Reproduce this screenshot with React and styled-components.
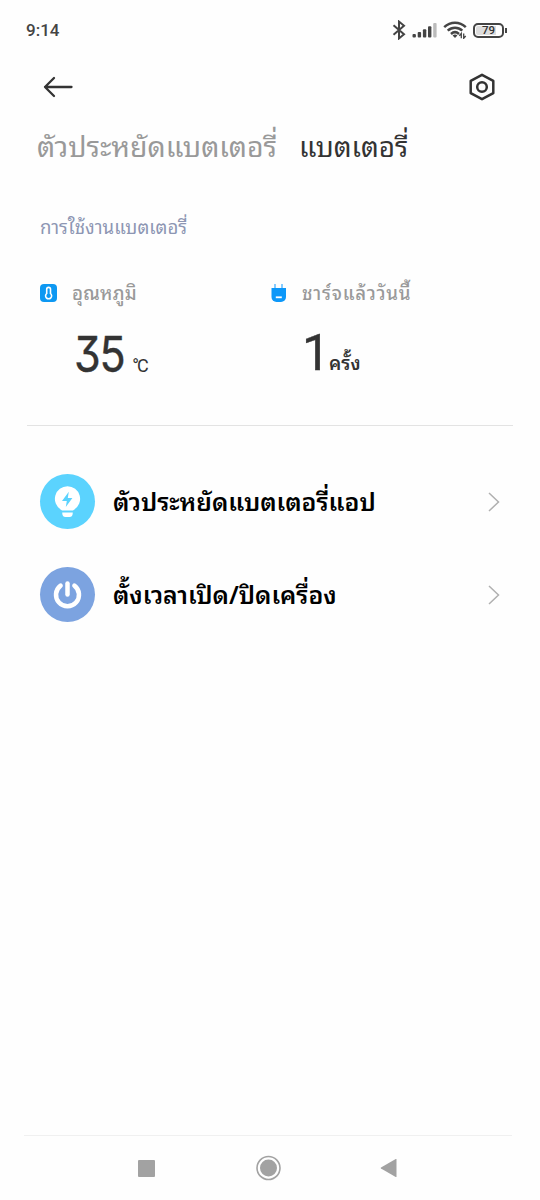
import styled, { createGlobalStyle } from 'styled-components';

export default function App() {
  return (
    <>
      <GlobalStyle />
      <Screen>
        <StatusBar>
          <Clock>9:14</Clock>
          <StatusIcons>
            <BluetoothIcon />
            <SignalIcon />
            <WifiIcon />
            <Battery>
              <BatteryBody>79</BatteryBody>
              <BatteryTip />
            </Battery>
          </StatusIcons>
        </StatusBar>
        <Toolbar>
          <BackIcon />
          <SettingsIcon />
        </Toolbar>
        <Tabs>
          <Tab>ตัวประหยัดแบตเตอรี่</Tab>
          <Tab $active>แบตเตอรี่</Tab>
        </Tabs>
        <SectionTitle>การใช้งานแบตเตอรี่</SectionTitle>
        <Stats>
          <Stat>
            <StatLabel>
              <ThermometerIcon />
              <LabelText>อุณหภูมิ</LabelText>
            </StatLabel>
            <StatValue>
              <Digits>35</Digits>
              <Degree>°C</Degree>
            </StatValue>
          </Stat>
          <Stat>
            <StatLabel>
              <PlugIcon />
              <LabelText $wide>ชาร์จแล้ววันนี้</LabelText>
            </StatLabel>
            <StatValue $raised>
              <Count>1</Count>
              <Times>ครั้ง</Times>
            </StatValue>
          </Stat>
        </Stats>
        <Divider />
        <Menu>
          <MenuItem>
            <Round $color="#5bd3fe">
              <BulbIcon />
            </Round>
            <MenuText>ตัวประหยัดแบตเตอรี่แอป</MenuText>
            <ChevronIcon />
          </MenuItem>
          <MenuItem>
            <Round $color="#7ca3e0">
              <PowerIcon />
            </Round>
            <MenuText>ตั้งเวลาเปิด/ปิดเครื่อง</MenuText>
            <ChevronIcon />
          </MenuItem>
        </Menu>
        <NavBar>
          <SquareIcon />
          <HomeIcon />
          <TriangleIcon />
        </NavBar>
      </Screen>
    </>
  );
}

const BluetoothIcon = () => (
  <svg width="14" height="20" viewBox="0 0 14 20" fill="none" stroke="#444" strokeWidth="2">
    <path d="M1.5 5.3 12 14.3 7 18.4V1.6l5 4.1L1.5 14.7" />
  </svg>
);

const SignalIcon = () => (
  <svg width="25" height="16" viewBox="0 0 25 16" fill="#444">
    <rect x="0.5" y="12" width="3.4" height="3.5" rx="1" />
    <rect x="5.7" y="10" width="3.4" height="5.5" rx="1" />
    <rect x="10.9" y="7.3" width="3.4" height="8.2" rx="1" />
    <rect x="16" y="4.2" width="3.4" height="11.3" rx="1" />
    <rect x="21.2" y="1" width="3.4" height="14.5" rx="1" fill="#bbb" />
  </svg>
);

const WifiIcon = () => (
  <svg width="24" height="18" viewBox="0 0 24 18" fill="none" stroke="#444" strokeWidth="2.5">
    <path d="M1.2 6.2C7.5 .3 16.5 .3 22.8 6.2" />
    <path d="M4.7 9.7C9 5.7 15 5.7 19.3 9.7" />
    <path d="M8 13C10.5 10.7 13.5 10.7 16 13" />
    <path d="M9.6 14.4C11 13.3 13 13.3 14.4 14.4L12 17Z" fill="#444" stroke="none" />
    <path d="M18.3 17.3V12.5l-2 2.3M20.7 12.5v4.8l2-2.3" strokeWidth="1.3" />
  </svg>
);

const BackIcon = () => (
  <svg width="30" height="22" viewBox="0 0 30 22" fill="none" stroke="#333" strokeWidth="2.3" strokeLinecap="round" strokeLinejoin="round">
    <path d="M28.5 11H2M11 2 2 11l9 9" />
  </svg>
);

const SettingsIcon = () => (
  <svg width="28" height="28" viewBox="0 0 28 28" fill="none" stroke="#333" strokeWidth="2.5" strokeLinejoin="round">
    <path d="M14 1.8 25.3 7.9v12.2L14 26.2 2.7 20.1V7.9Z" />
    <circle cx="14" cy="14" r="4.8" />
  </svg>
);

const ThermometerIcon = () => (
  <svg width="17" height="18" viewBox="0 0 17 18">
    <rect width="17" height="18" rx="4" fill="#0d98f2" />
    <path d="M6.7 5.3a1.9 1.9 0 0 1 3.8 0v4.2a3 3 0 1 1-3.8 0Z" fill="none" stroke="#fff" strokeWidth="1.6" />
  </svg>
);

const PlugIcon = () => (
  <svg width="17" height="18" viewBox="0 0 17 18">
    <path d="M4 0h2v4H4zM11 0h2v4h-2z" fill="#85cbff" />
    <path d="M1.500 4h14.500v9a5 5 0 0 1-5 5H6.500a5 5 0 0 1-5-5Z" fill="#0d98f9" />
    <path d="M5.8 13.300h6" stroke="#fff" strokeWidth="1.8" />
  </svg>
);

const BulbIcon = () => (
  <svg width="55" height="55" viewBox="0 0 55 55">
    <path d="M27.5 12.3a12.6 12.6 0 0 1 6.5 23.4q-1 .9-2 .9h-9q-1 0-2-.9a12.6 12.6 0 0 1 6.5-23.4Z" fill="#fff" />
    <path d="M28.8 17.8 22 27h4.8l-1 6 6.6-9h-4.6Z" fill="#5bd3fe" />
    <path d="M22.2 38.5h10.6q0 4.5-3.3 4.5h-4q-3.3 0-3.3-4.5Z" fill="#fff" />
  </svg>
);

const PowerIcon = () => (
  <svg width="55" height="55" viewBox="0 0 55 55" fill="none" stroke="#fff" strokeWidth="4.5" strokeLinecap="round">
    <path d="M27.5 16.5v11" />
    <path d="M20.6 18.6a11.5 11.5 0 1 0 13.8 0" />
  </svg>
);

const ChevronIcon = () => (
  <svg width="12" height="20" viewBox="0 0 12 20" fill="none" stroke="#b0b0b0" strokeWidth="1.5">
    <path d="M1 1l9.5 9L1 19" />
  </svg>
);

const SquareIcon = () => (
  <svg width="17" height="17" viewBox="0 0 17 17" fill="#a2a2a2">
    <rect width="17" height="17" rx="1" />
  </svg>
);

const HomeIcon = () => (
  <svg width="26" height="26" viewBox="0 0 26 26" fill="#a2a2a2">
    <circle cx="13.5" cy="13" r="11.5" fill="none" stroke="#a2a2a2" strokeWidth="1.6" />
    <circle cx="13.5" cy="13" r="8.5" />
  </svg>
);

const TriangleIcon = () => (
  <svg width="17" height="20" viewBox="0 0 17 20" fill="#a2a2a2">
    <path d="M16.5 1.5v17q0 .8-.8.4L1 10.6q-.8-.6 0-1.2L15.7 1.1q.8-.4.8.4Z" />
  </svg>
);

const GlobalStyle = createGlobalStyle`
  body {
    margin: 0;
    background: #fefefe;
    font-family: 'Noto Sans Thai Looped', 'Noto Looped Thai', 'Droid Sans Thai', Loma, Waree, Garuda, 'Noto Sans', sans-serif;
  }

  svg {
    display: block;
    flex-shrink: 0;
  }
`;

const Screen = styled.div`
  display: flex;
  flex-direction: column;
  width: 540px;
  height: 1200px;
  overflow: hidden;
  white-space: nowrap;
`;

const StatusBar = styled.div`
  display: flex;
  justify-content: space-between;
  align-items: center;
  height: 60px;
  padding: 0 33px 0 26px;
`;

const Clock = styled.span`
  font: 500 17px Roboto, sans-serif;
  color: #444;
`;

const StatusIcons = styled.div`
  display: flex;
  align-items: center;
  gap: 6px;
`;

const Battery = styled.div`
  display: flex;
  align-items: center;
  gap: 1px;
`;

const BatteryBody = styled.div`
  display: flex;
  align-items: center;
  justify-content: center;
  box-sizing: border-box;
  width: 31px;
  height: 15px;
  border: 2px solid #444;
  border-radius: 5px;
  box-shadow: inset 0 0 0 1px #fff;
  background: linear-gradient(to right, #ddd 79%, #fff 79%);
  font: 500 11.5px Roboto, sans-serif;
  color: #333;
`;

const BatteryTip = styled.div`
  width: 2px;
  height: 5px;
  background: #444;
`;

const Toolbar = styled.div`
  display: flex;
  justify-content: space-between;
  align-items: center;
  height: 53px;
  padding: 0 44px 0 43px;
`;

const Tabs = styled.div`
  display: flex;
  gap: 22px;
  height: 70px;
  padding-left: 37px;
  line-height: 63px;
`;

const Tab = styled.span`
  font-size: ${({ $active }) => ($active ? '27.9px' : '28.4px')};
  color: ${({ $active }) => ($active ? '#333' : '#999')};
`;

const SectionTitle = styled.div`
  height: 40px;
  padding: 24px 0 36px 40px;
  font-size: 18.6px;
  line-height: 38px;
  color: #8d96b3;
`;

const Stats = styled.div`
  display: flex;
  height: 142px;
  padding-left: 40px;
`;

const Stat = styled.div`
  width: 230px;
`;

const StatLabel = styled.div`
  display: flex;
  align-items: center;
  gap: 15px;
  height: 20px;
`;

const LabelText = styled.span`
  font-size: 18.6px;
  font-weight: 500;
  line-height: 20px;
  letter-spacing: ${({ $wide }) => ($wide ? '0.8px' : '0.2px')};
  color: #999;
  padding-bottom: 2px;
`;

const StatValue = styled.div`
  display: flex;
  align-items: baseline;
  height: 60px;
  margin-top: ${({ $raised }) => ($raised ? '20px' : '22px')};
  padding-left: ${({ $raised }) => ($raised ? '32px' : '34px')};
  line-height: 60px;
  color: #333;
`;

const Digits = styled.span`
  display: inline-block;
  font-family: Inter, sans-serif;
  font-size: 49px;
  font-weight: 400;
  font-feature-settings: 'cv09';
  letter-spacing: -1.5px;
  -webkit-text-stroke: 0.4px #333;
  transform: scaleX(0.88);
  transform-origin: left;
`;

const Count = styled(Digits)`
  font-family: Roboto, sans-serif;
  font-size: 50px;
  letter-spacing: 0;
  transform: none;
`;

const Degree = styled.span`
  margin-left: 1px;
  font-family: Roboto, sans-serif;
  font-size: 18px;
  letter-spacing: -2px;
`;

const Times = styled.span`
  margin-left: -1px;
  font-size: 18.6px;
  font-weight: 600;
`;

const Divider = styled.div`
  height: 1px;
  margin: 0 27px;
  background: #e3e3e3;
`;

const Menu = styled.div`
  flex: 1;
  padding-top: 29px;
`;

const MenuItem = styled.div`
  display: flex;
  align-items: center;
  height: 93px;
  padding: 0 40px;
`;

const Round = styled.div`
  width: 55px;
  height: 55px;
  border-radius: 50%;
  background: ${({ $color }) => $color};
`;

const MenuText = styled.span`
  flex: 1;
  padding: 0 0 4px 18px;
  font-size: 24.7px;
  font-weight: 600;
  color: #000;
`;

const NavBar = styled.div`
  display: flex;
  justify-content: space-between;
  align-items: center;
  height: 64px;
  margin: 0 28px 0 24px;
  padding: 0 115px 0 114px;
  border-top: 1px solid #f0f0f0;
`;
